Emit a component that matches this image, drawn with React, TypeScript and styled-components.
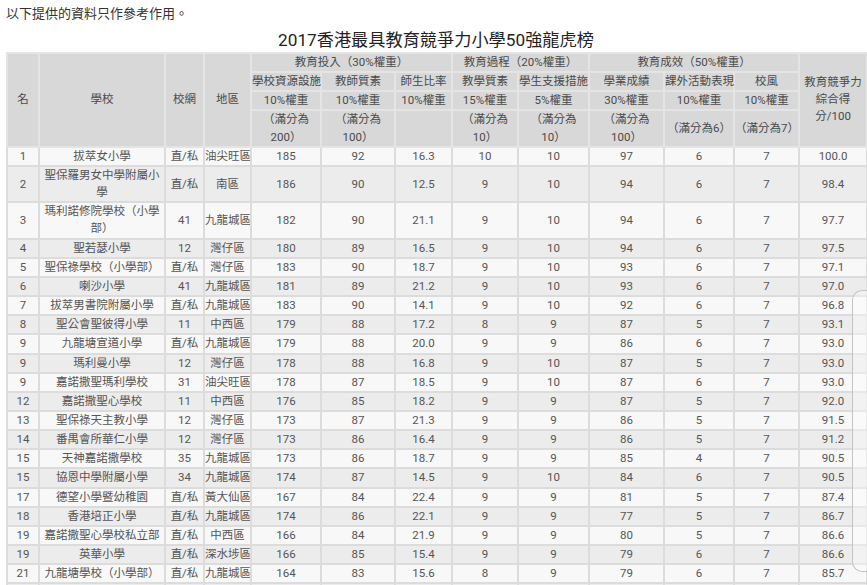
import React from 'react';
import styled, {createGlobalStyle} from 'styled-components';

const GlobalStyle = createGlobalStyle`
  html, body {
    margin: 0;
    padding: 0;
    background: #fff;
    overflow: hidden;
  }
  body {
    font-family: Roboto, "Noto Sans CJK TC", sans-serif;
  }
`;

const Page = styled.div`
  position: relative;
  width: 867px;
  height: 585px;
  overflow: hidden;
  padding: 0 0 0 6px;
  box-sizing: border-box;
`;

const Notice = styled.p`
  margin: 0;
  padding-top: 5px;
  font-size: 13px;
  line-height: 17px;
  color: #333;
`;

const Title = styled.h1`
  margin: 0;
  padding-top: 7px;
  font-size: 17.2px;
  line-height: 22px;
  font-weight: 400;
  color: #222;
  text-align: center;
  width: 860px;
`;

const Table = styled.table`
  margin-top: 1px;
  border-collapse: collapse;
  table-layout: fixed;
  width: 860px;
  font-size: 11.5px;
  line-height: 17.15px;
  color: #555;
`;

const HeadCell = styled.th<{nowrap?: boolean}>`
  background: #d8d8d8;
  border: 2px solid #e4e4e4;
  font-weight: 400;
  color: #4a4a4a;
  text-align: center;
  vertical-align: middle;
  padding: 0 ${p => (p.nowrap ? '0' : '4px')};
  white-space: ${p => (p.nowrap ? 'nowrap' : 'normal')};
`;

const Row = styled.tr<{shade: boolean}>`
  background: ${p => (p.shade ? '#ececec' : '#f8f8f8')};
`;

const Cell = styled.td<{wrap?: boolean}>`
  border: 2px solid #dcdcdc;
  padding: 0;
  text-align: center;
  vertical-align: middle;
  white-space: ${p => (p.wrap ? 'normal' : 'nowrap')};
  overflow: hidden;
`;

const ScrollHandle = styled.div`
  position: absolute;
  left: 852px;
  top: 290px;
  width: 30px;
  height: 282px;
  box-sizing: border-box;
  border: 1.5px solid #c4c4c4;
  border-right: none;
  border-radius: 10px 0 0 10px;
  background: rgba(255, 255, 255, 0.35);
`;

const widths = [32, 126, 39, 47, 70, 74, 57, 66, 71, 75, 70, 65, 68];

type School = [string, string, string, string, ...string[]];

const rows: School[] = [
  ['1', '拔萃女小學', '直/私', '油尖旺區', '185', '92', '16.3', '10', '10', '97', '6', '7', '100.0'],
  ['2', '聖保羅男女中學附屬小學', '直/私', '南區', '186', '90', '12.5', '9', '10', '94', '6', '7', '98.4'],
  ['3', '瑪利諾修院學校（小學部）', '41', '九龍城區', '182', '90', '21.1', '9', '10', '94', '6', '7', '97.7'],
  ['4', '聖若瑟小學', '12', '灣仔區', '180', '89', '16.5', '9', '10', '94', '6', '7', '97.5'],
  ['5', '聖保祿學校（小學部）', '直/私', '灣仔區', '183', '90', '18.7', '9', '10', '93', '6', '7', '97.1'],
  ['6', '喇沙小學', '41', '九龍城區', '181', '89', '21.2', '9', '10', '93', '6', '7', '97.0'],
  ['7', '拔萃男書院附屬小學', '直/私', '九龍城區', '183', '90', '14.1', '9', '10', '92', '6', '7', '96.8'],
  ['8', '聖公會聖彼得小學', '11', '中西區', '179', '88', '17.2', '8', '9', '87', '5', '7', '93.1'],
  ['9', '九龍塘宣道小學', '直/私', '九龍城區', '179', '88', '20.0', '9', '9', '86', '6', '7', '93.0'],
  ['9', '瑪利曼小學', '12', '灣仔區', '178', '88', '16.8', '9', '10', '87', '5', '7', '93.0'],
  ['9', '嘉諾撒聖瑪利學校', '31', '油尖旺區', '178', '87', '18.5', '9', '10', '87', '6', '7', '93.0'],
  ['12', '嘉諾撒聖心學校', '11', '中西區', '176', '85', '18.2', '9', '9', '87', '5', '7', '92.0'],
  ['13', '聖保祿天主教小學', '12', '灣仔區', '173', '87', '21.3', '9', '9', '86', '5', '7', '91.5'],
  ['14', '番禺會所華仁小學', '12', '灣仔區', '173', '86', '16.4', '9', '9', '86', '5', '7', '91.2'],
  ['15', '天神嘉諾撒學校', '35', '九龍城區', '173', '86', '18.7', '9', '9', '85', '4', '7', '90.5'],
  ['15', '協恩中學附屬小學', '34', '九龍城區', '174', '87', '14.5', '9', '10', '84', '6', '7', '90.5'],
  ['17', '德望小學暨幼稚園', '直/私', '黃大仙區', '167', '84', '22.4', '9', '9', '81', '5', '7', '87.4'],
  ['18', '香港培正小學', '直/私', '九龍城區', '174', '86', '22.1', '9', '9', '77', '5', '7', '86.7'],
  ['19', '嘉諾撒聖心學校私立部', '直/私', '中西區', '166', '84', '21.9', '9', '9', '80', '5', '7', '86.6'],
  ['19', '英華小學', '直/私', '深水埗區', '166', '85', '15.4', '9', '9', '79', '6', '7', '86.6'],
  ['21', '九龍塘學校（小學部）', '直/私', '九龍城區', '164', '83', '15.6', '8', '9', '79', '6', '7', '85.7'],
];

const subjects = ['學校資源設施', '教師質素', '師生比率', '教學質素', '學生支援措施', '學業成績', '課外活動表現', '校風'];
const weights = ['10%權重', '10%權重', '10%權重', '15%權重', '5%權重', '30%權重', '10%權重', '10%權重'];
const maxima = ['（滿分為200）', '（滿分為100）', '', '（滿分為10）', '（滿分為10）', '（滿分為100）', '（滿分為6）', '（滿分為7）'];

export default function App() {
  return (
    <Page>
      <GlobalStyle />
      <Notice>以下提供的資料只作參考作用。</Notice>
      <Title>2017香港最具教育競爭力小學50強龍虎榜</Title>
      <Table>
        <colgroup>
          {widths.map((w, i) => (
            <col key={i} style={{width: w}} />
          ))}
        </colgroup>
        <thead>
          <tr>
            <HeadCell rowSpan={4}>名</HeadCell>
            <HeadCell rowSpan={4}>學校</HeadCell>
            <HeadCell rowSpan={4}>校網</HeadCell>
            <HeadCell rowSpan={4}>地區</HeadCell>
            <HeadCell colSpan={3}>教育投入（30%權重）</HeadCell>
            <HeadCell colSpan={2}>教育過程（20%權重）</HeadCell>
            <HeadCell colSpan={3}>教育成效（50%權重）</HeadCell>
            <HeadCell rowSpan={4} nowrap>
              教育競爭力
              <br />
              綜合得
              <br />
              分/100
            </HeadCell>
          </tr>
          <tr>
            {subjects.map(s => (
              <HeadCell key={s} nowrap>
                {s}
              </HeadCell>
            ))}
          </tr>
          <tr>
            {weights.map((w, i) => (
              <HeadCell key={i} nowrap>
                {w}
              </HeadCell>
            ))}
          </tr>
          <tr>
            {maxima.map((m, i) => (
              <HeadCell key={i} nowrap={i >= 6}>
                {m}
              </HeadCell>
            ))}
          </tr>
        </thead>
        <tbody>
          {rows.map((r, i) => (
            <Row key={i} shade={i % 2 === 1}>
              {r.map((v, j) => (
                <Cell key={j} wrap={j === 1}>
                  {v}
                </Cell>
              ))}
            </Row>
          ))}
          <Row shade>
            {widths.map((_, j) => (
              <Cell key={j}>&nbsp;</Cell>
            ))}
          </Row>
        </tbody>
      </Table>
      <ScrollHandle />
    </Page>
  );
}
